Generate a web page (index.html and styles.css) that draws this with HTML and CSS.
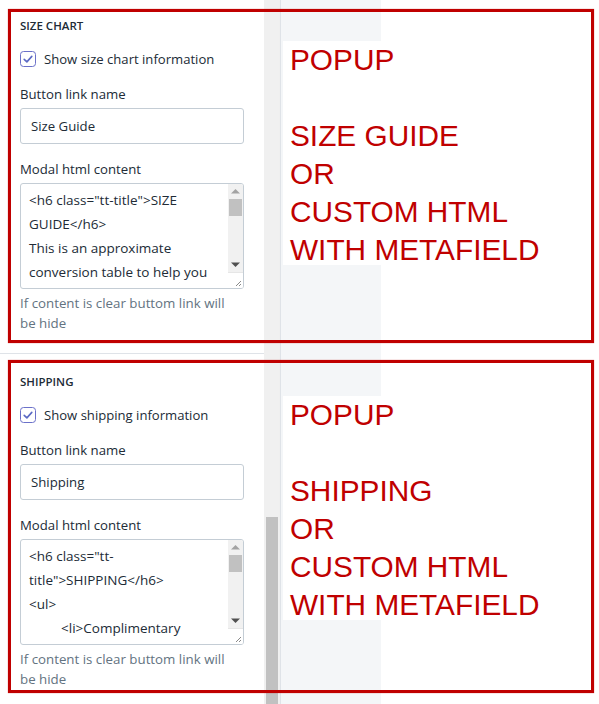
FILE: index.html
```html
<!DOCTYPE html>
<html>
<head>
<meta charset="utf-8">
<link rel="stylesheet" href="styles.css">
</head>
<body>
<div class="app">
  <aside class="sidebar">
    <section class="sect sect-first">
      <h3 class="sect-title">SIZE CHART</h3>
      <label class="check">
        <span class="box"><svg width="16" height="16" viewBox="0 0 16 16"><rect x="0.5" y="0.5" width="15" height="15" rx="3" fill="#fff" stroke="#6b71c9"/><path d="M4.2 8.3 L6.9 10.9 L11.8 5.4" fill="none" stroke="#5c6ac4" stroke-width="1.6" stroke-linecap="round" stroke-linejoin="round"/></svg></span>
        <span>Show size chart information</span>
      </label>
      <div class="field">
        <div class="flabel">Button link name</div>
        <div class="input">Size Guide</div>
      </div>
      <div class="field">
        <div class="flabel">Modal html content</div>
        <div class="textarea">
          <div class="ta-text">
            <span class="ln">&lt;h6 class="tt-title"&gt;SIZE</span>
            <span class="ln">GUIDE&lt;/h6&gt;</span>
            <span class="ln">This is an approximate</span>
            <span class="ln">conversion table to help you</span>
          </div>
          <div class="ta-sb">
            <div class="ta-btn"><svg width="15" height="15" viewBox="0 0 15 15"><path d="M3 9.5 L7.5 5 L12 9.5 Z" fill="#a3a3a3"/></svg></div>
            <div class="ta-track"><div class="ta-thumb"></div></div>
            <div class="ta-btn"><svg width="15" height="15" viewBox="0 0 15 15"><path d="M3 5.5 L7.5 10 L12 5.5 Z" fill="#505050"/></svg></div>
            <div class="ta-corner"><svg width="15" height="15" viewBox="0 0 15 15"><path d="M13 8 L8 13 M13 11 L11 13" stroke="#8a8a8a" stroke-width="1"/></svg></div>
          </div>
        </div>
        <div class="help"><span class="hl">If content is clear buttom link will</span><span class="hl">be hide</span></div>
      </div>
    </section>
    <section class="sect">
      <h3 class="sect-title">SHIPPING</h3>
      <label class="check">
        <span class="box"><svg width="16" height="16" viewBox="0 0 16 16"><rect x="0.5" y="0.5" width="15" height="15" rx="3" fill="#fff" stroke="#6b71c9"/><path d="M4.2 8.3 L6.9 10.9 L11.8 5.4" fill="none" stroke="#5c6ac4" stroke-width="1.6" stroke-linecap="round" stroke-linejoin="round"/></svg></span>
        <span>Show shipping information</span>
      </label>
      <div class="field">
        <div class="flabel">Button link name</div>
        <div class="input">Shipping</div>
      </div>
      <div class="field">
        <div class="flabel">Modal html content</div>
        <div class="textarea">
          <div class="ta-text">
            <span class="ln">&lt;h6 class="tt-</span>
            <span class="ln">title"&gt;SHIPPING&lt;/h6&gt;</span>
            <span class="ln">&lt;ul&gt;</span>
            <span class="ln ind">&lt;li&gt;Complimentary</span>
          </div>
          <div class="ta-sb">
            <div class="ta-btn"><svg width="15" height="15" viewBox="0 0 15 15"><path d="M3 9.5 L7.5 5 L12 9.5 Z" fill="#a3a3a3"/></svg></div>
            <div class="ta-track"><div class="ta-thumb"></div></div>
            <div class="ta-btn"><svg width="15" height="15" viewBox="0 0 15 15"><path d="M3 5.5 L7.5 10 L12 5.5 Z" fill="#505050"/></svg></div>
            <div class="ta-corner"><svg width="15" height="15" viewBox="0 0 15 15"><path d="M13 8 L8 13 M13 11 L11 13" stroke="#8a8a8a" stroke-width="1"/></svg></div>
          </div>
        </div>
        <div class="help"><span class="hl">If content is clear buttom link will</span><span class="hl">be hide</span></div>
      </div>
    </section>
  </aside>
  <div class="sb-track"><div class="sb-thumb"></div></div>
  <div class="preview-gray"></div>
  <div class="preview-white"></div>
</div>

<div class="callout callout-1">POPUP<br><br>SIZE GUIDE<br>OR<br>CUSTOM HTML<br>WITH METAFIELD</div>
<div class="callout callout-2">POPUP<br><br>SHIPPING<br>OR<br>CUSTOM HTML<br>WITH METAFIELD</div>
<div class="mark mark-1"></div>
<div class="mark mark-2"></div>
</body>
</html>
```

FILE: styles.css
```css
* { box-sizing: border-box; }
html, body { margin: 0; padding: 0; }
body {
  width: 599px;
  height: 704px;
  overflow: hidden;
  position: relative;
  font-family: "Open Sans", "Noto Sans", sans-serif;
  color: #212b36;
  background: #fff;
}
.app {
  display: flex;
  height: 704px;
  overflow: hidden;
}
.sidebar {
  width: 264px;
  flex: none;
  background: #fff;
}
.sect {
  display: flex;
  flex-direction: column;
  gap: 15px;
  padding: 20px 20px 20px;
  border-bottom: 1px solid #dfe3e8;
}
.sect-first { padding-top: 18px; }
.sect-title {
  margin: 0;
  font-size: 11.5px;
  line-height: 16px;
  font-weight: 600;
  color: #212b36;
}
.check {
  display: flex;
  align-items: center;
  gap: 8px;
  font-size: 13.1px;
  line-height: 20px;
  color: #212b36;
}
.box { display: flex; width: 16px; height: 16px; }
.field {
  display: flex;
  flex-direction: column;
  gap: 4px;
}
.flabel {
  font-size: 13.2px;
  line-height: 20px;
  color: #212b36;
}
.input {
  height: 36px;
  border: 1px solid #c4cdd5;
  border-radius: 3px;
  padding: 0 10px;
  font-size: 13.2px;
  line-height: 34px;
  color: #212b36;
}
.textarea {
  height: 106px;
  border: 1px solid #c4cdd5;
  border-radius: 3px;
  display: flex;
  overflow: hidden;
}
.ta-text {
  flex: 1;
  padding: 4px 8px;
  font-size: 13.5px;
  line-height: 24px;
  color: #212b36;
  overflow: hidden;
}
.ln { display: block; white-space: pre; }
.ind { padding-left: 32px; }
.ta-sb {
  width: 15px;
  flex: none;
  display: flex;
  flex-direction: column;
  background: #f1f1f1;
}
.ta-btn { height: 15px; display: flex; }
.ta-track { flex: 1; padding: 0 1px; }
.ta-thumb { height: 17px; background: #c1c1c1; }
.ta-corner {
  height: 16px;
  display: flex;
  background: #fff;
  border-top: 1px solid #e6e6e6;
}
.help {
  font-size: 13.3px;
  line-height: 20px;
  color: #637381;
  display: flex;
  flex-direction: column;
}
.hl { white-space: nowrap; }

.sb-track {
  width: 16px;
  flex: none;
  background: #f0f0f0;
  display: flex;
  flex-direction: column;
  justify-content: flex-end;
}
.sb-thumb {
  height: 187px;
  margin: 0 2px;
  background: #c1c1c1;
}
.preview-gray {
  width: 101px;
  flex: none;
  background: #f4f6f8;
  border-left: 1px solid #dfe3e8;
  box-shadow: 1px 0 2px rgba(0,0,0,0.06);
}
.preview-white { flex: 1; background: #fff; }

.callout {
  position: absolute;
  left: 283px;
  width: 316px;
  height: 224px;
  padding-left: 7px;
  background: #fff;
  font-family: "Liberation Sans", Arial, sans-serif;
  font-size: 29.8px;
  line-height: 38px;
  color: #c00000;
}
.callout-1 { top: 41px; }
.callout-2 { top: 396px; }

.mark {
  position: absolute;
  left: 8px;
  width: 586px;
  border: 3px solid #c00000;
  box-shadow: 0 0 1px rgba(192,0,0,0.6);
}
.mark-1 { top: 9px; height: 334px; }
.mark-2 { top: 360px; height: 333px; }
```
